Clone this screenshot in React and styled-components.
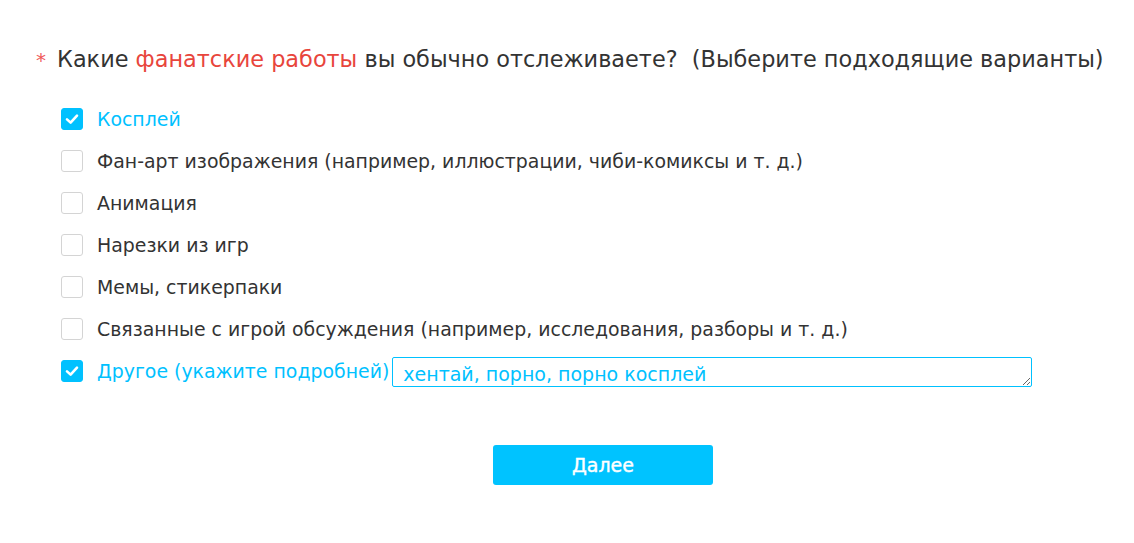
import React, { useState } from 'react'
import styled, { createGlobalStyle } from 'styled-components'

const GlobalStyle = createGlobalStyle`
  body {
    margin: 0;
    background: #fff;
    font-family: 'DejaVu Sans', 'Open Sans', sans-serif;
  }
`

const OPTIONS = [
  'Косплей',
  'Фан-арт изображения (например, иллюстрации, чиби-комиксы и т. д.)',
  'Анимация',
  'Нарезки из игр',
  'Мемы, стикерпаки',
  'Связанные с игрой обсуждения (например, исследования, разборы и т. д.)',
  'Другое (укажите подробней)',
]

const ACCENT = '#00c1ff'

export default function App() {
  const [checked, setChecked] = useState([true, false, false, false, false, false, true])
  const [other, setOther] = useState('хентай, порно, порно косплей')
  const toggle = i => setChecked(checked.map((c, j) => (i === j ? !c : c)))

  return (
    <Page>
      <GlobalStyle />
      <Title>
        <Star>*</Star>
        Какие <Mark>фанатские работы</Mark> вы обычно отслеживаете?&nbsp; (Выберите подходящие варианты)
      </Title>
      <List>
        {OPTIONS.map((label, i) => (
          <Row key={i} onClick={() => toggle(i)}>
            <Box on={checked[i]}>
              {checked[i] && (
                <svg width="16" height="16" viewBox="0 0 16 16">
                  <path d="M3 8.4 L6.6 11.6 L13 4.6" fill="none" stroke="#fff" strokeWidth="2.6" strokeLinecap="round" strokeLinejoin="round" />
                </svg>
              )}
            </Box>
            <Label on={checked[i]}>{label}</Label>
            {i === OPTIONS.length - 1 && (
              <Other value={other} onChange={e => setOther(e.target.value)} onClick={e => e.stopPropagation()} />
            )}
          </Row>
        ))}
      </List>
      <Footer>
        <Next>Далее</Next>
      </Footer>
    </Page>
  )
}

const Page = styled.div`
  padding: 41px 0 0 36px;
  height: 543px;
  box-sizing: border-box;
`
const Title = styled.div`
  font-size: 22.4px;
  color: #333;
  line-height: 36px;
  white-space: nowrap;
`
const Star = styled.span`
  color: #f05a5a;
  margin-right: 11px;
  font-size: 20px;
`
const Mark = styled.span`
  color: #e8453c;
`
const List = styled.div`
  margin: 25px 0 0 25px;
  display: flex;
  flex-direction: column;
  gap: 11px;
`
const Row = styled.div`
  display: flex;
  align-items: center;
  height: 31px;
  cursor: pointer;
`
const Box = styled.div`
  width: 22px;
  height: 22px;
  box-sizing: border-box;
  border-radius: 3px;
  border: 1px solid ${p => (p.on ? ACCENT : '#d4d4d4')};
  background: ${p => (p.on ? ACCENT : '#fff')};
  display: flex;
  align-items: center;
  justify-content: center;
  margin-right: 14px;
  flex-shrink: 0;
`
const Label = styled.span`
  font-size: 18.9px;
  color: ${p => (p.on ? ACCENT : '#333')};
  white-space: nowrap;
`
const Other = styled.textarea`
  margin-left: 3px;
  width: 640px;
  height: 30px;
  box-sizing: border-box;
  border: 1px solid ${ACCENT};
  border-radius: 2px;
  color: ${ACCENT};
  font-family: inherit;
  font-size: 19px;
  line-height: 26px;
  padding: 3px 0 0 10px;
  overflow: hidden;
  outline: none;
  margin-top: 2px;
`
const Footer = styled.div`
  display: flex;
  justify-content: center;
  margin: 59px 0 0 -36px;
  padding-left: 72px;
`
const Next = styled.button`
  width: 220px;
  height: 40px;
  border: none;
  border-radius: 3px;
  background: #00c3ff;
  color: #fff;
  font-family: inherit;
  font-size: 19px;
  font-weight: normal;
  -webkit-text-stroke: 0.4px #fff;
  cursor: pointer;
`
